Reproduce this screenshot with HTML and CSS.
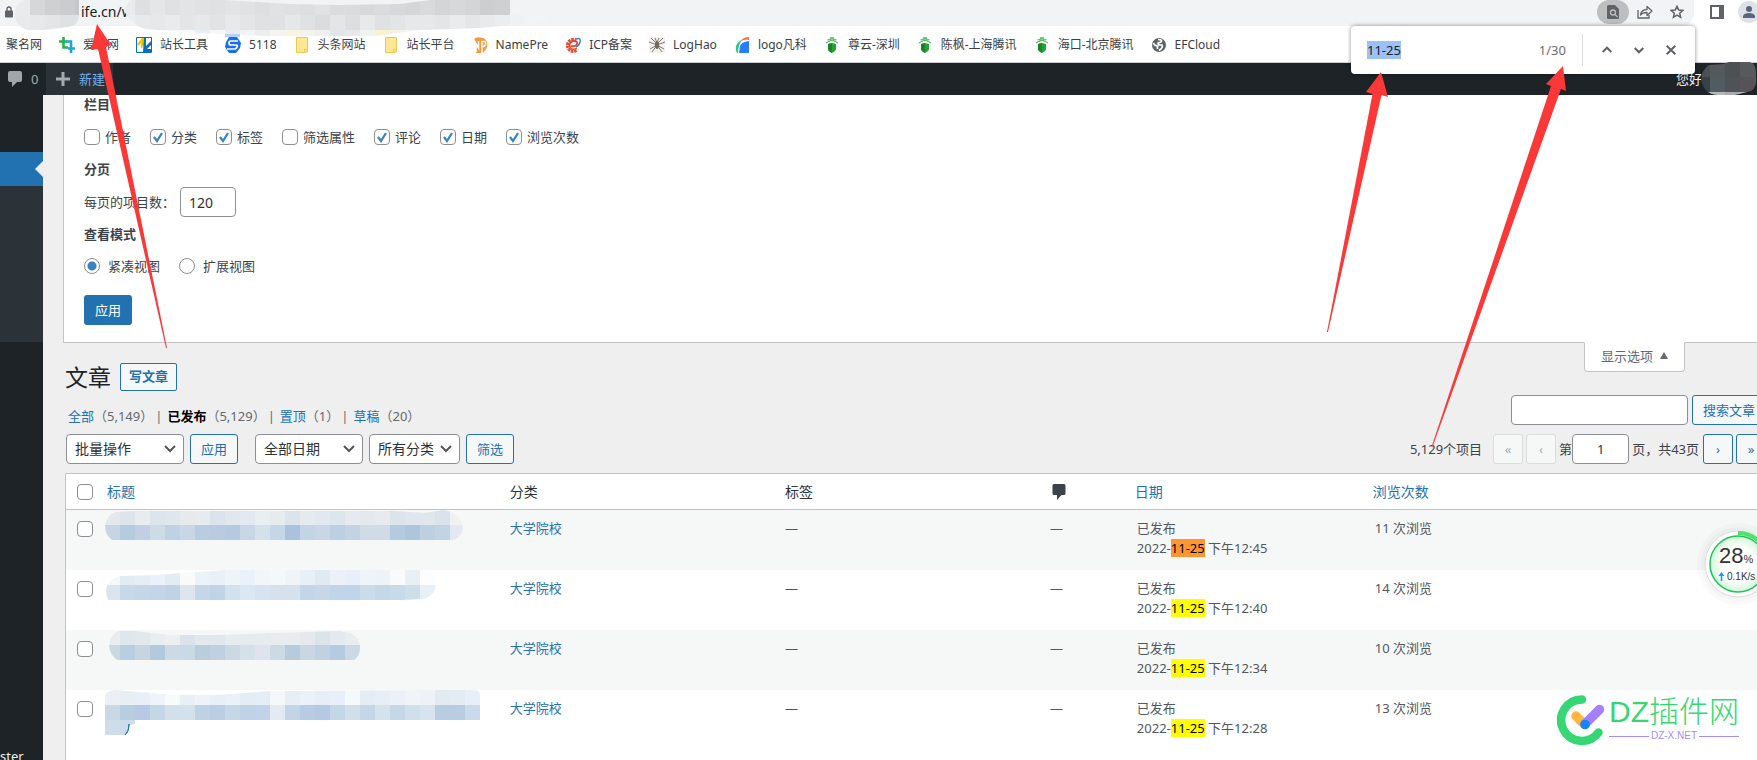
FILE: index.html
```html
<!DOCTYPE html>
<html lang="zh-CN">
<head>
<meta charset="utf-8">
<title>文章</title>
<link rel="stylesheet" href="styles.css">
</head>
<body>
<header class="toolbar">
  <div class="address">
    <svg class="lock" width="8" height="12" viewBox="0 0 8 12"><path d="M2 5V3a2 2 0 0 1 4 0v2" fill="none" stroke="#5f6368" stroke-width="1.4"/><rect y="4.500" width="8" height="7" rx="1" fill="#5f6368"/></svg>
    <span class="url">ife.cn/w</span>
    <svg class="url-mosaic" width="550" height="37">
      <clipPath id="u"><path d="M24 0H79V16Q78 26 68 27L44 30H28Q15 27 15 14Q15 4 24 0ZM131 0H224L290 4L340 5L400 4L430 0H510V15L548 16L545 22L480 28L420 30L375 36H265L200 33L145 29Q130 24 125 12Q124 5 131 0Z"/></clipPath>
      <g clip-path="url(#u)" data-x="15" data-cell="15" data-rows="#e9ebec #d6d7d9 #cfd0d2 #cbccce #c4c6c9 #f1f3f4 #f1f3f4 #e9ebec #dddfe0 #e4e6e7 #dfe1e2 #e2e4e6 #e0e2e3 #dfe1e3 #e3e4e5 #e0e2e3 #dddfe1 #e1e2e4 #dee0e1 #dcdee0 #dfe1e3 #dadcde #d9dbdd #d6d8da #d9dbdc #d7d8da #d5d6d8 #d8dadb #d4d5d7 #d6d8d9 #d4d5d7 #cdced0 #cfd0d2 #f1f3f4 #f1f3f4|#e8eaeb #e6e8e9 #e3e5e6 #dfe2e3 #e0e2e3 #f1f3f4 #f1f3f4 #ebedee #e7e9ea #e6e8ea #e9ebec #e3e5e7 #e6e8e9 #e1e3e5 #e7e9ea #e3e5e6 #dfe1e3 #dfe1e3 #e5e7e8 #dfe1e2 #dadcde #e3e5e7 #dcdee0 #e7e9ea #dfe1e3 #e2e4e6 #e6e8e9 #e6e8e9 #e3e5e6 #e9ebec #e4e6e7 #e8eaeb #ebedee #eff1f2 #f2f4f5 #f2f4f5|#fff #fff #fff #fff #fff #fff #fff #f4f5f6 #f1f2f3 #f6f7f8 #f4f5f6 #f5f7f9 #e6eefb #f6f7f8 #e9ebed #f2f3f4 #eceeef #f4f4f1 #f8f4df #f4f2e9 #efeff0 #e4e5e7 #e7e8e9 #f2f2ef #faf2cf #f4f2e6 #f4f5f6 #f8f8f8 #fff"></g>
      <path fill="#b9d0fb" d="M225 34h15v4h-15z"/>
    </svg>
    <div class="page-actions">
      <button class="pill" aria-label="查找"><svg width="12" height="14" viewBox="0 0 12 14"><path d="M1.500 0H8l4 4v9a1 1 0 0 1-1 1H1a1 1 0 0 1-1-1V1.500Q0 0 1.500 0Z" fill="#5f6368"/><circle cx="6" cy="7.500" r="2.500" fill="none" stroke="#bdbec0" stroke-width="1.300"/><path d="M8 9.500l2.500 2.500" stroke="#bdbec0" stroke-width="1.300"/></svg></button>
      <button aria-label="分享"><svg width="16" height="14" viewBox="0 0 16 14" fill="none" stroke="#5f6368" stroke-width="1.300"><path d="M1 5v8h11V10"/><path d="M3.500 10C4 6 7 4.500 10 4.500V1.500L15 6l-5 4.500V7.500C7 7.500 5 8 3.500 10Z" stroke-linejoin="round"/></svg></button>
      <button aria-label="收藏"><svg width="14" height="14" viewBox="0 0 14 14" fill="none" stroke="#5f6368" stroke-width="1.500"><path d="M7 1.300l1.700 3.800 4.100.4-3.100 2.700.9 4.100L7 10.200l-3.600 2.100.9-4.100L1.200 5.500l4.100-.4Z"/></svg></button>
    </div>
  </div>
  <div class="browser-actions">
    <button aria-label="侧边栏"><svg width="14" height="14" viewBox="0 0 14 14"><path d="M1 1h12v12H1z" fill="none" stroke="#5f6368" stroke-width="2"/><path d="M9 1h4v12H9z" fill="#5f6368"/></svg></button>
    <button class="avatar" aria-label="用户"><svg width="22" height="22" viewBox="0 0 22 22"><circle cx="11" cy="11" r="11" fill="#dee1e6"/><circle cx="11" cy="8" r="3" fill="#5a6480"/><path d="M5 17v-2q1-3 6-3t6 3v2Z" fill="#5a6480"/></svg></button>
  </div>
</header>

<nav class="bookmarks">
  <a href="#">聚名网</a>
  <a href="#"><svg width="16" height="16" viewBox="0 0 16 16" fill="none" stroke-width="2.600"><path d="M4.500 0v10.500H9M0 4.500h8" stroke="#27b34a"/><path d="M7 4.500h5V16M16 11.500H9" stroke="#18a5e0"/></svg>爱名网</a>
  <a href="#"><svg width="16" height="16" viewBox="0 0 16 16"><path d="M.5.5h15v15H.5z" fill="#fff" stroke="#0b6db7"/><path d="M1 7l5-6h2v7l-3 4V6L2 9Z" fill="#f8c300"/><path d="M8 1h2v8l5-5v4l-4 4h4v3H7Z" fill="#0b6db7"/></svg>站长工具</a>
  <a href="#"><svg width="16" height="16" viewBox="0 0 16 16"><path d="M4 0h8l4 6-1 5-4 5H4l-4-6 1-5Z" fill="#1a6df5"/><path d="M13 4H5.500Q4 4 4 6t2 2h5q2 0 1 2t-2 2H2" fill="none" stroke="#fff" stroke-width="1.700"/></svg>5118</a>
  <a href="#"><svg width="16" height="16" viewBox="0 0 16 16"><path d="M2.500.500h11v13l-2 2h-9Z" fill="#ffe793" stroke="#e9c951"/><path d="M10.500 15v-3q3 0 3 3Z" fill="#fff0a8" stroke="#e9c951"/></svg>头条网站</a>
  <a href="#"><svg width="16" height="16" viewBox="0 0 16 16"><path d="M2.500.500h11v13l-2 2h-9Z" fill="#ffe793" stroke="#e9c951"/><path d="M10.500 15v-3q3 0 3 3Z" fill="#fff0a8" stroke="#e9c951"/></svg>站长平台</a>
  <a href="#"><svg width="16" height="16" viewBox="0 0 16 16" fill="none"><path d="M3 1q5-2 10 1 3 3 2 8-2 5-5 6H4V7L2 4Z" fill="#f9973c"/><path d="M0 4h2.500l4 7V4M4 7v8M10 16V4.500h2q2 0 1.500 3-.5 2-3.500 2" stroke="#fff" stroke-width="1.500"/></svg>NamePre</a>
  <a href="#"><svg width="16" height="16" viewBox="0 0 16 16" fill="none"><path d="M11.500 13.500A6 6 0 1 1 11 3" stroke="#e6492d" stroke-width="3" stroke-dasharray="2.500 .8"/><path d="M12 11.500Q5 14 4.500 8.500 5 4 9 4t3 3-6 2" stroke="#e6492d" stroke-width="1.800"/><path d="M11 2q5-2 4 3-1 4-4 5" stroke="#3284c8" stroke-width="1.500"/></svg>ICP备案</a>
  <a href="#"><svg width="16" height="16" viewBox="0 0 16 16"><path d="M0 0h16v16H0z" fill="#f2f1ef"/><path d="M2 1l6 6 6-6M0 5l8 3 8-3M1 12l7-4 7 4M3 15l5-7 5 7M6 1l2 5 2-5" fill="none" stroke="#80786d"/><ellipse cx="8" cy="8" rx="2" ry="4" fill="#746755"/></svg>LogHao</a>
  <a href="#"><svg width="16" height="16" viewBox="0 0 16 16"><path d="M5 16L6 9q1-4 9-5v12Z" fill="#277cff"/><path d="M3 16Q-1 7 9 2 4 7 4 16Z" fill="#2ac77f"/><path d="M7 4q2-4 8-4v3q-5-1-8 1Z" fill="#ff793b"/></svg>logo凡科</a>
  <a href="#"><svg width="16" height="16" viewBox="0 0 16 16"><path d="M4 7l4-1 4 1v5q0 2-4 4-4-2-4-4Z" fill="#23a534"/><path d="M4 7l4-1v10q-4-2-4-4Z" fill="#178529"/><path d="M2 6q6-5 12 0M3.500 3q4.500-2 9 0M6 .800h4M5 5l3-4 3 4" fill="none" stroke="#58b963" stroke-width="1.200"/></svg>尊云-深圳</a>
  <a href="#"><svg width="16" height="16" viewBox="0 0 16 16"><path d="M4 7l4-1 4 1v5q0 2-4 4-4-2-4-4Z" fill="#23a534"/><path d="M4 7l4-1v10q-4-2-4-4Z" fill="#178529"/><path d="M2 6q6-5 12 0M3.500 3q4.500-2 9 0M6 .800h4M5 5l3-4 3 4" fill="none" stroke="#58b963" stroke-width="1.200"/></svg>陈枫-上海腾讯</a>
  <a href="#"><svg width="16" height="16" viewBox="0 0 16 16"><path d="M4 7l4-1 4 1v5q0 2-4 4-4-2-4-4Z" fill="#23a534"/><path d="M4 7l4-1v10q-4-2-4-4Z" fill="#178529"/><path d="M2 6q6-5 12 0M3.500 3q4.500-2 9 0M6 .800h4M5 5l3-4 3 4" fill="none" stroke="#58b963" stroke-width="1.200"/></svg>海口-北京腾讯</a>
  <a href="#"><svg width="16" height="16" viewBox="0 0 16 16"><circle cx="8" cy="8" r="7" fill="#5f6368"/><path d="M7 2.500q5 0 3 2.500l-3 1q0 2 2 2h2q1 2-1 4l-2 1.500M2.500 6q1 3 4 3v3" fill="none" stroke="#fff" stroke-width="1.700"/></svg>EFCloud</a>
</nav>

<div class="adminbar">
  <a class="comments" href="#"><svg width="14" height="16" viewBox="0 0 14 16"><path d="M2 0h10q2 0 2 2v7q0 2-2 2H9l-5 5v-5H2q-2 0-2-2V2q0-2 2-2Z" fill="#a0a5aa"/></svg>0</a>
  <a class="new" href="#"><svg width="14" height="14" viewBox="0 0 14 14"><path d="M5.500 0h3v5.500H14v3H8.500V14h-3V8.500H0v-3h5.500Z" fill="#a7aaad"/></svg>新建</a>
  <a class="account" href="#">您好</a>
  <svg class="name-mosaic" width="56" height="34"><clipPath id="n"><path d="M8 3L22 2 28 0H48Q56 1 55 15 56 29 46 30L34 33H16Q3 32 0 18 1 7 8 3Z"/></clipPath>
    <g clip-path="url(#n)" data-x="-6" data-cell="15" data-rows="#4b5054 #54595d #4e5154 #58595d #555559|#384147 #505c62 #4f5257 #575258 #615f68|#b0b1b5 #b6b7ba #aaabb0 #b7b5ba #b5b4b9"></g></svg>
</div>

<div class="layout">
  <aside class="sidebar">
    <div class="menu-current"></div>
    <div class="submenu"></div>
    <div class="menu-last">ster</div>
  </aside>
  <main>
    <form class="screen-options" onsubmit="return false">
      <h2>栏目</h2>
      <div class="checks">
        <label><input type="checkbox">作者</label>
        <label><input type="checkbox" checked>分类</label>
        <label><input type="checkbox" checked>标签</label>
        <label><input type="checkbox">筛选属性</label>
        <label><input type="checkbox" checked>评论</label>
        <label><input type="checkbox" checked>日期</label>
        <label><input type="checkbox" checked>浏览次数</label>
      </div>
      <h2>分页</h2>
      <label class="per-page">每页的项目数：<input type="text" value="120"></label>
      <h2>查看模式</h2>
      <div class="radios">
        <label><input type="radio" name="mode" checked>紧凑视图</label>
        <label><input type="radio" name="mode">扩展视图</label>
      </div>
      <button class="primary">应用</button>
    </form>

    <div class="wrap">
      <div class="heading">
        <h1>文章</h1>
        <a class="add-new" href="#">写文章</a>
        <button class="options-tab">显示选项 <svg width="8" height="7" viewBox="0 0 8 7"><path d="M4 0l4 7H0Z" fill="#646970"/></svg></button>
      </div>
      <div class="filters">
        <ul class="views">
          <li><a href="#">全部</a><span>（5,149）</span></li>
          <li><a class="current" href="#">已发布</a><span>（5,129）</span></li>
          <li><a href="#">置顶</a><span>（1）</span></li>
          <li><a href="#">草稿</a><span>（20）</span></li>
        </ul>
        <div class="search"><input type="search" aria-label="搜索文章"><button class="button">搜索文章</button></div>
      </div>
      <div class="tablenav">
        <select class="bulk" aria-label="批量操作"><option>批量操作</option></select>
        <button class="button apply">应用</button>
        <select class="dates" aria-label="日期"><option>全部日期</option></select>
        <select class="cats" aria-label="分类"><option>所有分类</option></select>
        <button class="button">筛选</button>
        <div class="pagination">
          <span class="count">5,129个项目</span>
          <button class="button page" disabled>«</button>
          <button class="button page" disabled>‹</button>
          <label class="page-no">第<input type="text" value="1"></label>
          <span class="total">页，共43页</span>
          <button class="button page">›</button>
          <button class="button page">»</button>
        </div>
      </div>
      <table>
        <colgroup><col class="c-check"><col class="c-title"><col class="c-cat"><col class="c-tags"><col class="c-comments"><col class="c-date"><col></colgroup>
        <thead><tr>
          <th class="check"><input type="checkbox" aria-label="全选"></th>
          <th><a href="#">标题</a></th><th>分类</th><th>标签</th>
          <th class="comment-head"><svg width="14" height="16" viewBox="0 0 14 16"><path d="M2 0h10q1.500 0 1.500 1.500v8q0 1.500-1.500 1.500H9.500L5 16v-5H2Q.5 11 .5 9.500v-8Q.5 0 2 0Z" fill="#3c434a"/></svg></th>
          <th><a href="#">日期</a></th><th><a href="#">浏览次数</a></th>
        </tr></thead>
        <tbody>
          <tr>
            <td class="check"><input type="checkbox" aria-label="选择"></td>
            <td class="title"><svg width="380" height="48"><clipPath id="m1"><path d="M10 2L30 1H290L320 3 338 0Q355 2 358 18 356 28 348 30H7Q0 25 0 16 2 5 10 2Z"/></clipPath><g clip-path="url(#m1)" data-x="0" data-cell="15" data-rows="#e4e8ec #dee5ea #e8ecf1 #dce5ec #dfe6ec #e6eaed #e6ebef #dbe3ec #e0e8ed #e3e8f1 #e9eef0 #e6ebed #dbe4eb #e5eaee #e2e8f0 #dde5ed #e6eaf0 #e5e9ed #e7ebef #dce4eb #dfe6ed #dfe7ec #dae3eb #eff1f2|#c7d5e3 #b5cce0 #c0d0e2 #ccdbe6 #bfd1e3 #c8d6e5 #b9cde2 #b8cbe0 #b5cae0 #c7d7e6 #d5e1ea #c5d7e6 #abc2dd #c3d4e4 #c9d6e6 #bccfe3 #c4d3e4 #cfdbe6 #cfdbe5 #b4cade #adc6de #bdd0e2 #c0d4e4 #e3e8f1"></g></svg></td>
            <td><a href="#">大学院校</a></td><td>—</td><td>—</td>
            <td class="inset">已发布<br>2022-<mark class="active">11-25</mark> 下午12:45</td><td class="inset">11 次浏览</td>
          </tr>
          <tr>
            <td class="check"><input type="checkbox" aria-label="选择"></td>
            <td class="title"><svg width="380" height="48"><clipPath id="m2"><path d="M15 6L50 5 120 0H325Q331 5 330 18 328 27 318 29L296 30H3Q-1 21 3 14 7 8 15 6Z"/></clipPath><g clip-path="url(#m2)" data-x="0" data-cell="15" data-rows="#f5f8fa #e2ebf2 #e6edf5 #ebf1fa #e4ecf3 #f9fafc #ecf3f8 #e9f1f7 #eff4f8 #ebf1fa #f3f6f9 #f4f8fb #f0f4f8 #e8eff7 #e1eaf3 #edf1f7 #e9eff8 #eef4f7 #edf3f7 #f9fafc #e8eff5 #fbfdfe|#dbe5ef #c7d9e7 #c5d7e7 #c3d5e7 #c0d3e5 #dde5ee #c3d7e9 #c0d4e8 #d3e1ee #dbe8f1 #d7e3ef #d6e1ec #d4e2ed #c2d6e7 #c8d7e7 #c0d5e8 #c0d5e9 #cadceb #c4d8e7 #c7dae9 #cfdfea #e7eff7"></g></svg></td>
            <td><a href="#">大学院校</a></td><td>—</td><td>—</td>
            <td class="inset">已发布<br>2022-<mark>11-25</mark> 下午12:40</td><td class="inset">14 次浏览</td>
          </tr>
          <tr>
            <td class="check"><input type="checkbox" aria-label="选择"></td>
            <td class="title"><svg width="380" height="48"><clipPath id="m3"><path d="M13 1H30L65 5H115L200 2 235 1Q253 3 255 15 256 25 249 30H12Q5 25 4 16 5 5 13 1Z"/></clipPath><g clip-path="url(#m3)" data-x="0" data-cell="15" data-rows="#e9edef #dfe7ec #e1e9ed #e8edef #edf0f1 #dae3eb #e2e8ec #e1e8ed #e7ecef #e6ebee #e6ebee #e8ecef #e8ecef #e5e9ed #dce4eb #e3e9ee #e9edef|#cad8e3 #b9cfe1 #c7d5e3 #b3cadd #ccdae5 #cad9e6 #bacdde #bed0e2 #ccd8e3 #d5e0e9 #dee3ed #ccdae6 #b6cbdd #c9d7e5 #c0d1e2 #b5cbe3 #cbd9e4"></g></svg></td>
            <td><a href="#">大学院校</a></td><td>—</td><td>—</td>
            <td class="inset">已发布<br>2022-<mark>11-25</mark> 下午12:34</td><td class="inset">10 次浏览</td>
          </tr>
          <tr>
            <td class="check"><input type="checkbox" aria-label="选择"></td>
            <td class="title"><svg width="380" height="48"><clipPath id="m4"><path d="M0 5Q4 0 10 0L70 5H115L165 1 345 0H370Q375 1 375 5V30H30V34L24 35 20 45H0Z"/></clipPath><g clip-path="url(#m4)" data-x="0" data-cell="15" data-rows="#ecf0f6 #e7eff5 #e9eef8 #eef4f9 #f8fbfc #e8eff5 #eff3f7 #e8eff8 #ebf1f9 #e4ecf6 #e5edf6 #f4f8fb #e7eff5 #ebf1f8 #e7eef8 #e8eff8 #f4f9fb #e5edf4 #e7eef6 #ecf1f8 #f0f3f7 #edf2f8 #e2ebf2 #e3ecf3 #e8eff9|#c9d8e7 #b7cee1 #b6cae4 #c3d8e7 #d2e0eb #d3e1ec #bdd2e4 #bbcfe4 #c6d8e8 #bfd3e7 #c0d3e8 #e3eaf3 #c2d5e6 #b6cce2 #b4cae2 #c4d7e8 #d1dfeb #c5d6e6 #d4e2ed #c5d8e7 #cfdfeb #d8e3f0 #b7cde1 #b7cde1 #c8daec|#cfddeb #ccdcea #ffffff"></g><path d="M24 34q0 7-4 11 4-3 4-11Z" fill="#2271b1" stroke="#2271b1"/></svg></td>
            <td><a href="#">大学院校</a></td><td>—</td><td>—</td>
            <td class="inset">已发布<br>2022-<mark>11-25</mark> 下午12:28</td><td class="inset">13 次浏览</td>
          </tr>
        </tbody>
      </table>
    </div>
  </main>
</div>

<div class="findbar">
  <span class="query"><span>11-25</span></span>
  <span class="matches">1/30</span>
  <button aria-label="上一个"><svg width="10" height="10" viewBox="0 0 10 10"><path d="M.7 7L5 2.700 9.300 7"/></svg></button>
  <button aria-label="下一个"><svg width="10" height="10" viewBox="0 0 10 10"><path d="M.7 3L5 7.300 9.300 3"/></svg></button>
  <button aria-label="关闭"><svg width="10" height="10" viewBox="0 0 10 10"><path d="M.7.700l8.600 8.600M9.300.700L.7 9.300"/></svg></button>
</div>

<div class="speed">
  <svg width="84" height="84" viewBox="0 0 84 84">
    <defs><radialGradient id="g"><stop offset=".6" stop-color="#fff"/><stop offset="1" stop-color="#d2f6d9"/></radialGradient></defs>
    <circle cx="42" cy="42" r="41" fill="#000" opacity=".02"/><circle cx="42" cy="42" r="37" fill="#000" opacity=".02"/>
    <circle cx="42" cy="42" r="33" fill="#fff" stroke="#dcdcdc"/>
    <path d="M42 11a31 31 0 0 1 31 31" fill="none" stroke="#4fe36c" stroke-width="4"/>
    <circle cx="42" cy="42" r="28" fill="url(#g)" stroke="#1fc35c" stroke-width="1.500"/>
    <path d="M25.500 59v-7" stroke="#2f8ff5" stroke-width="1.500"/><path d="M25.500 50l3 4h-6Z" fill="#2f8ff5"/>
  </svg>
  <span class="percent">28<small>%</small></span>
  <span class="rate">0.1K/s</span>
</div>

<div class="watermark">
  <svg width="50" height="52" viewBox="0 0 50 52" fill="none" stroke-linecap="round">
    <path d="M25 5.500A20.700 20.700 0 1 0 41.500 38.500" stroke="#34d774" stroke-width="8.500"/>
    <path d="M19 22l8 8" stroke="#ffb63f" stroke-width="9.500"/><path d="M28 30L42.500 15.500" stroke="#a480ff" stroke-width="9.500"/><circle cx="28" cy="30.500" r="4.800" fill="#1684fc"/>
  </svg>
  <div><strong>DZ插件网</strong><em>DZ-X.NET</em></div>
</div>

<svg class="arrows" width="1757" height="460" fill="#fb3838">
  <path d="M97 24L111 45 106 47 167 348H166L98 49 91 50Z"/>
  <path d="M1381 72L1388 97 1381.500 95 1328 332H1327L1372.500 94 1366 92Z"/>
  <path d="M1563 66L1566 91 1561 89 1432.500 447H1431.500L1551 86 1546 84Z"/>
</svg>
<script src="script.js"></script>
</body>
</html>
```
FILE: styles.css
```css
* { box-sizing: border-box; }
body {
  margin: 0;
  height: 100vh;
  display: flex;
  flex-direction: column;
  position: relative;
  overflow: hidden;
  background: #efefef;
  color: #3c434a;
  font: 13px/18px "Noto Sans", "Noto Sans CJK SC", sans-serif;
}
button, input, select { font: inherit; color: inherit; margin: 0; }
button { border: 0; padding: 0; background: none; }
a { color: #2271b1; text-decoration: none; }
svg { display: block; flex: none; }
h1, h2, ul { margin: 0; padding: 0; }

.toolbar { display: flex; height: 26px; flex: none; background: #fff; }
.address {
  flex: 1;
  display: flex;
  position: relative;
  align-items: center;
  padding: 0 9px 2px 5px;
  background: #f1f3f4;
  border-radius: 0 0 13px 0;
}
.url { margin-left: 68px; font-size: 14px; color: #202124; }
.url-mosaic { position: absolute; left: 0; top: 0; }
.page-actions { margin-left: auto; display: flex; align-items: center; gap: 16px; }
.page-actions button { display: flex; justify-content: center; width: 16px; }
.page-actions .pill { width: 32px; height: 24px; align-items: center; border-radius: 12px; background: #bdbec0; margin-right: -8px; }
.browser-actions { width: 63px; display: flex; align-items: center; gap: 14px; padding: 0 0 2px 16px; overflow: hidden; }

.bookmarks {
  display: flex;
  flex: none;
  align-items: center;
  gap: 17px;
  height: 37px;
  padding: 1px 0 0 6px;
  background: #fff;
  border-bottom: 1px solid #ccd0d4;
  position: relative;
  z-index: -1;
}
.bookmarks a { display: flex; align-items: center; gap: 8px; font-size: 12px; color: #3c4043; white-space: nowrap; }

.adminbar { display: flex; flex: none; height: 32px; background: #1d2327; position: relative; }
.adminbar a { display: flex; align-items: center; gap: 9px; }
.comments { width: 46px; padding-left: 8px; color: #a7aaad; }
.new { width: 67px; padding-left: 10px; background: #2c3338; color: #72aee6; }
.adminbar .new { color: #72aee6; }
.adminbar .comments { color: #a7aaad; }
.adminbar .account { margin-left: auto; padding-right: 55px; color: #f0f0f1; }
.name-mosaic { position: absolute; right: 0; top: -1px; }

.layout { flex: 1; display: flex; min-height: 0; }
.sidebar { width: 43px; flex: none; display: flex; flex-direction: column; padding-top: 57px; background: #1d2327; color: #f0f0f1; overflow: hidden; }
.menu-current { height: 34px; flex: none; background: #2271b1; display: flex; align-items: center; justify-content: flex-end; }
.menu-current::after { content: ""; border: 8px solid transparent; border-left: 0; border-right-color: #efefef; }
.submenu { height: 156px; flex: none; background: #2c3338; }
.menu-last { margin-top: auto; line-height: 14px; margin-bottom: -3px; }
main { flex: 1; min-width: 0; padding-left: 20px; overflow: hidden; }

.screen-options {
  display: flex;
  flex-direction: column;
  align-items: flex-start;
  padding: 0 20px 17px;
  background: #fff;
  border: solid #c3c4c7;
  border-width: 0 0 1px 1px;
}
h2 { font-size: 13px; line-height: 18px; font-weight: 600; }
.checks { display: flex; align-items: center; gap: 19px; height: 47px; }
.checks label { display: flex; align-items: center; gap: 5px; }
.radios { display: flex; align-items: flex-end; gap: 19px; height: 52px; padding-bottom: 20px; }
.radios label { display: flex; align-items: center; gap: 8px; }
input[type=checkbox], input[type=radio] {
  appearance: none;
  width: 16px;
  height: 16px;
  flex: none;
  border: 1px solid #8c8f94;
  border-radius: 4px;
  background: #fff;
}
input[type=checkbox]:checked { background: url("data:image/svg+xml,%3Csvg xmlns='http://www.w3.org/2000/svg' viewBox='0 0 14 14'%3E%3Cpath d='M3 7l3 4 5-8' fill='none' stroke='%233582c4' stroke-width='2.2'/%3E%3C/svg%3E") center / 14px no-repeat; }
input[type=radio] { border-radius: 50%; }
input[type=radio]:checked { background: radial-gradient(circle, #3582c4 4px, #fff 5px); }
.per-page { display: flex; align-items: center; gap: 5px; padding: 9px 0 8px; }
input[type=text], input[type=search], select { height: 30px; border: 1px solid #8c8f94; border-radius: 4px; background: #fff; color: #2c3338; font-size: 14px; outline: 0; }
.per-page input { width: 56px; padding: 0 8px; }
.primary { width: 48px; height: 30px; border-radius: 3px; background: #2271b1; color: #fff; }

.wrap { margin: 0 -9px 0 2px; }
.heading { display: flex; align-items: flex-start; height: 52px; }
h1 { font-size: 23px; line-height: 30px; font-weight: 400; color: #1d2327; padding-top: 19px; }
.add-new { margin: 20px 0 0 9px; height: 28px; padding: 0 8px; border: 1px solid #2271b1; border-radius: 2px; background: #f6f7f7; font-weight: 600; line-height: 25px; }
.options-tab {
  margin: -1px 81px 0 auto;
  display: flex;
  align-items: center;
  gap: 7px;
  height: 30px;
  padding: 0 16px 3px;
  background: #fff;
  border: 1px solid #c3c4c7;
  border-top-color: #fff;
  border-radius: 0 0 4px 4px;
  color: #646970;
}
.filters { display: flex; justify-content: space-between; height: 39px; }
.views { display: flex; list-style: none; padding: 12px 0 0 3px; color: #646970; white-space: nowrap; }
.views li + li::before { content: "|"; margin: 0 5px 0 2px; }
.views .current { color: #000; font-weight: 600; }
.search { display: flex; gap: 4px; }
.search input { width: 177px; }
.button { height: 30px; padding: 0 10px; border: 1px solid #2271b1; border-radius: 3px; background: #f6f7f7; color: #2271b1; white-space: nowrap; }
.tablenav { display: flex; gap: 6px; height: 39px; }
select { appearance: none; padding: 0 8px; color: #2c3338; background: #fff url("data:image/svg+xml,%3Csvg xmlns='http://www.w3.org/2000/svg' viewBox='0 0 12 8'%3E%3Cpath d='M1 1l5 5 5-5' fill='none' stroke='%23555' stroke-width='2'/%3E%3C/svg%3E") right 7px center / 12px 8px no-repeat; }
.bulk { width: 118px; margin-left: 1px; }
.dates { width: 108px; }
.cats { width: 91px; }
.apply { margin-right: 11px; }
.pagination { margin-left: auto; display: flex; gap: 3px; height: 30px; align-items: center; white-space: nowrap; }
.count { margin-right: 8px; }
.page { width: 30px; padding: 0; }
.page:disabled { border-color: #dcdcde; color: #a7aaad; }
.page-no { display: flex; align-items: center; }
.page-no input { width: 57px; text-align: center; font-size: 13px; }
.total { margin-right: 1px; }

table { width: 100%; table-layout: fixed; border-collapse: separate; border-spacing: 0; border: 1px solid #c3c4c7; background: #fff; color: #50575e; }
.c-check { width: 31px; }
.c-title { width: 23.7%; }
.c-cat { width: 16.2%; }
.c-tags { width: 15.6%; }
.c-comments { width: 5%; }
.c-date { width: 14%; }
th { height: 36px; padding: 0 10px; border-bottom: 1px solid #c3c4c7; text-align: left; font-size: 14px; font-weight: 400; color: #2c3338; }
td { height: 60px; padding: 8px 10px 10px; vertical-align: top; line-height: 20px; }
tbody tr:nth-child(odd) { background: #f6f7f7; }
tbody tr:last-child td { height: 80px; }
th.check, td.check { padding: 0 0 0 11px; }
td.check { padding-top: 11px; }
.check input { display: block; }
td.title { padding: 0 0 0 8px; }
td.inset, .comment-head { padding-left: 12px; }
mark { background: #ff0; color: #000; }
mark.active { background: #ff9632; }

.findbar {
  position: absolute;
  top: 26px;
  right: 62px;
  width: 344px;
  height: 48px;
  display: flex;
  align-items: center;
  padding: 0 19px 0 16px;
  background: #fff;
  border-radius: 4px;
  box-shadow: 0 0 4px rgba(0, 0, 0, .45);
  color: #202124;
}
.query { flex: 1; }
.query span { background: #9ac1f8; }
.matches { color: #6e6e72; padding-right: 16px; border-right: 1px solid #dadce0; line-height: 32px; margin-right: 19px; }
.findbar button + button { margin-left: 22px; }
.findbar path { fill: none; stroke: #5f6368; stroke-width: 2; }

.speed { position: absolute; right: -23px; top: 522px; color: #333; }
.percent { position: absolute; left: 23px; top: 22px; font: 22px/24px "Liberation Sans", sans-serif; white-space: nowrap; }
.percent small { font-size: 11px; }
.rate { position: absolute; left: 31px; top: 48px; font: 10px/14px "Liberation Sans", sans-serif; }

.watermark { position: absolute; right: 18px; top: 694px; display: flex; gap: 2px; }
.watermark strong { display: block; font: 300 30px/36px "Liberation Sans", "Noto Sans CJK SC", sans-serif; color: #34d774; white-space: nowrap; }
.watermark em { display: flex; align-items: center; gap: 2px; font: 10px/12px "Liberation Sans", sans-serif; color: #a78bfa; }
.watermark em::before, .watermark em::after { content: ""; flex: 1; height: 1px; background: #a78bfa; }
.arrows { position: absolute; left: 0; top: 0; pointer-events: none; }
```
FILE: script.js
```js
// Fills each mosaic group with a grid of coloured cells.
document.querySelectorAll("[data-rows]").forEach(function (group) {
  var size = Number(group.dataset.cell);
  var left = Number(group.dataset.x);
  group.dataset.rows.split("|").forEach(function (row, y) {
    row.split(" ").forEach(function (colour, x) {
      var cell = document.createElementNS("http://www.w3.org/2000/svg", "rect");
      cell.setAttribute("x", left + x * size);
      cell.setAttribute("y", y * size);
      cell.setAttribute("width", size);
      cell.setAttribute("height", size);
      cell.setAttribute("fill", colour);
      group.appendChild(cell);
    });
  });
});
```
